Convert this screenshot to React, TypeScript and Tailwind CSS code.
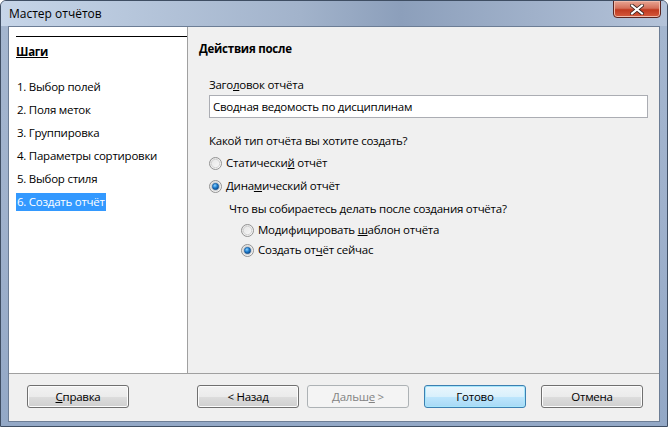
import React from 'react'

const FONT = { fontFamily: '"Open Sans", "Noto Sans", sans-serif' }

function Radio({ checked }: { checked?: boolean }) {
  return (
    <svg width="13" height="13" viewBox="0 0 13 13" className="shrink-0">
      <defs>
        <linearGradient id="rg" x1="0" y1="0" x2="1" y2="1">
          <stop offset="0" stopColor="#e2e2e2" />
          <stop offset="1" stopColor="#fbfbfb" />
        </linearGradient>
        <radialGradient id="dot" cx="0.4" cy="0.35" r="0.7">
          <stop offset="0" stopColor="#8fd3ff" />
          <stop offset="0.5" stopColor="#1e7fd0" />
          <stop offset="1" stopColor="#0d3f7a" />
        </radialGradient>
      </defs>
      <circle cx="6.5" cy="6.5" r="6" fill="url(#rg)" stroke="#929292" />
      <circle cx="6.5" cy="6.5" r="4.2" fill="none" stroke="#d2d2d2" strokeWidth="1" />
      {checked && <circle cx="6.5" cy="6.5" r="3.2" fill="url(#dot)" stroke="#14508e" strokeWidth="0.6" />}
    </svg>
  )
}

function Btn({ children, variant }: { children: React.ReactNode; variant?: 'default' | 'disabled' }) {
  const base = 'w-[102px] h-[23px] rounded-[3px] flex items-center justify-center'
  if (variant === 'disabled')
    return <div className={`${base} border border-[#adb2b5] bg-[#f4f4f4] text-[#838383]`}>{children}</div>
  if (variant === 'default')
    return (
      <div className={`${base} border border-[#3c7fb1] bg-[linear-gradient(#eaf6fd_0%,#d9f0fc_50%,#bee6fd_51%,#a7d9f5_100%)] shadow-[inset_0_0_0_1px_#a7e6fb] text-black`}>
        {children}
      </div>
    )
  return (
    <div className={`${base} border border-[#707070] bg-[linear-gradient(#f2f2f2_0%,#ebebeb_50%,#dddddd_51%,#cfcfcf_100%)] shadow-[inset_0_0_0_1px_#fcfcfc] text-black`}>
      {children}
    </div>
  )
}

const STEPS = ['1. Выбор полей', '2. Поля меток', '3. Группировка', '4. Параметры сортировки', '5. Выбор стиля', '6. Создать отчёт']

export default function App() {
  return (
    <div
      className="relative w-[668px] h-[427px] overflow-hidden text-black bg-[linear-gradient(180deg,#b9cbe3_0%,#a4b6cf_6%,#9fb1cc_50%,#93a8c6_100%)] border border-[#3f4e63] rounded-t-[6px]"
      style={FONT}
    >
      {/* title bar */}
      <div className="h-[25px] flex items-center pl-[8px] text-[12px] text-black bg-[linear-gradient(90deg,#c6d5e8_0%,#a2b3cb_45%,#8c9fbb_60%,#b4c3d9_100%)]">
        Мастер отчётов
      </div>
      <div className="absolute top-[-1px] right-[6px] w-[48px] h-[18px] rounded-b-[4px] border border-[#5a2521] bg-[linear-gradient(#e8a593_0%,#d4705a_45%,#c0391f_55%,#d65a3c_100%)] flex items-center justify-center shadow-[inset_0_0_0_1px_#f0b9a8]">
        <svg width="14" height="11" viewBox="0 0 14 11">
          <path d="M2 1.5 L12 9.5 M12 1.5 L2 9.5" stroke="#3a2420" strokeWidth="3.6" strokeLinecap="square" />
          <path d="M2 1.5 L12 9.5 M12 1.5 L2 9.5" stroke="#ffffff" strokeWidth="2" strokeLinecap="square" />
        </svg>
      </div>

      {/* client */}
      <div className="mx-[7px] h-[396px] flex flex-col bg-[#f0f0f0] border border-[#6c7d95] text-[11.5px] tracking-[-0.25px]">
        <div className="flex h-[346px]">
          <div className="w-[179px] bg-white border-r border-[#a0a0a0] pl-[7px] pt-[9px]">
            <div className="border-t border-black pt-[6px]">
              <div className="font-bold underline leading-[18px]">Шаги</div>
            </div>
            <div className="mt-[17px] flex flex-col gap-[5px]">
              {STEPS.map((s, i) => (
                <div key={s} className="leading-[18px]">
                  <span className={i === 5 ? 'bg-[#3399ff] text-white px-[1px] inline-block' : 'px-[1px] inline-block'}>{s}</span>
                </div>
              ))}
            </div>
          </div>
          <div className="flex-1 pl-[11px] pt-[13px]">
            <div className="font-bold leading-[18px]">Действия после</div>
            <div className="pl-[10px] mt-[18px] pr-[11px]">
              <div className="leading-[18px]">
                Заго<span className="underline">л</span>овок отчёта
              </div>
              <div className="mt-[1px] h-[23px] bg-white border border-[#abadb3] flex items-center pl-[3px]">
                Сводная ведомость по дисциплинам
              </div>
              <div className="mt-[14px] leading-[18px]">Какой тип отчёта вы хотите создать?</div>
              <div className="mt-[3px] flex items-center gap-[4px] h-[20px] pl-[0px]">
                <Radio />
                <span>
                  Статически<span className="underline">й</span> отчёт
                </span>
              </div>
              <div className="mt-[3px] flex items-center gap-[4px] h-[20px]">
                <Radio checked />
                <span>
                  Дина<span className="underline">м</span>ический отчёт
                </span>
              </div>
              <div className="pl-[20px] mt-[3px]">
                <div className="leading-[20px]">Что вы собираетесь делать после создания отчёта?</div>
                <div className="pl-[12px] mt-[1px]">
                  <div className="flex items-center gap-[4px] h-[20px]">
                    <Radio />
                    <span>
                      Модифицировать <span className="underline">ш</span>аблон отчёта
                    </span>
                  </div>
                  <div className="flex items-center gap-[4px] h-[20px]">
                    <Radio checked />
                    <span>
                      Создать от<span className="underline">ч</span>ёт сейчас
                    </span>
                  </div>
                </div>
              </div>
            </div>
          </div>
        </div>
        <div className="flex-1 border-t border-[#a0a0a0] flex items-start pt-[11px] pl-[18px]">
          <Btn>
            <span className="underline">С</span>правка
          </Btn>
          <div className="ml-[68px] flex gap-[8px]">
            <Btn>&lt; Назад</Btn>
            <Btn variant="disabled">
              Дальш<span className="underline">е</span>&nbsp;&gt;
            </Btn>
          </div>
          <div className="ml-[15px] flex gap-[15px]">
            <Btn variant="default">Готово</Btn>
            <Btn>Отмена</Btn>
          </div>
        </div>
      </div>
    </div>
  )
}
